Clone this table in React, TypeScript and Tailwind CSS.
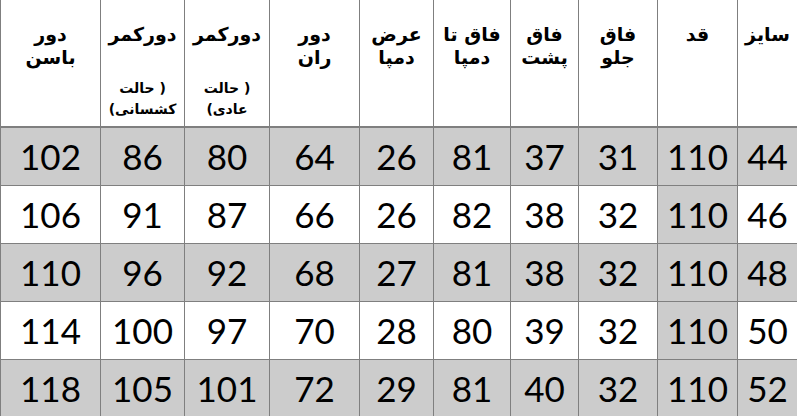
import React from 'react';

type Column = {
  title: string[];
  note?: string[];
  width: string;
};

// columns in reading order (right to left)
const columns: Column[] = [
  { title: ['سایز'], width: '60px' },
  { title: ['قد'], width: '80px' },
  { title: ['فاق', 'جلو'], width: '79px' },
  { title: ['فاق', 'پشت'], width: '68px' },
  { title: ['فاق تا', 'دمپا'], width: '77px' },
  { title: ['عرض', 'دمپا'], width: '74px' },
  { title: ['دور', 'ران'], width: '90px' },
  // the note lines are written in visual order (see dir="ltr" below)
  { title: ['دورکمر'], note: ['حالت )', '(عادی'], width: '85px' },
  { title: ['دورکمر'], note: ['حالت )', '(کشسانی'], width: '84px' },
  { title: ['دور', 'باسن'], width: '100px' },
];

const rows: number[][] = [
  [44, 110, 31, 37, 81, 26, 64, 80, 86, 102],
  [46, 110, 32, 38, 82, 26, 66, 87, 91, 106],
  [48, 110, 32, 38, 81, 27, 68, 92, 96, 110],
  [50, 110, 32, 39, 80, 28, 70, 97, 100, 114],
  [52, 110, 32, 40, 81, 29, 72, 101, 105, 118],
];

const SizeTable = () => {
  return (
    <div dir="rtl" className="w-[797px] h-[416px] overflow-hidden bg-white text-black">
      <div className="grid grid-cols-[60px_80px_79px_68px_77px_74px_90px_85px_84px_100px]">
        {columns.map((col, i) => (
          <div
            key={`h-${i}`}
            className="h-[128px] border-l border-b-2 border-[#7f7f7f] flex flex-col items-center pt-[23px] font-['DejaVu_Sans',sans-serif] font-bold text-[19px] leading-[23px]"
          >
            {col.title.map(line => (
              <div key={line} className="whitespace-nowrap">{line}</div>
            ))}
            {col.note && (
              <div className="mt-[32px] text-[14px] leading-[21px] flex flex-col items-center">
                {col.note.map(line => (
                  <div key={line} dir="ltr" className="whitespace-nowrap">{line}</div>
                ))}
              </div>
            )}
          </div>
        ))}

        {rows.map((row, r) =>
          row.map((value, c) => {
            const shaded = r % 2 === 0 || c === 1;
            return (
              <div
                key={`${r}-${c}`}
                className={`h-[58px] border-l border-b border-[#7f7f7f] flex items-center justify-center font-['Lato',sans-serif] text-[35px] leading-none ${
                  shaded ? 'bg-[#cccccc]' : 'bg-white'
                }`}
              >
                {value}
              </div>
            );
          })
        )}
      </div>
    </div>
  );
};

export default function App() {
  return <SizeTable />;
}
